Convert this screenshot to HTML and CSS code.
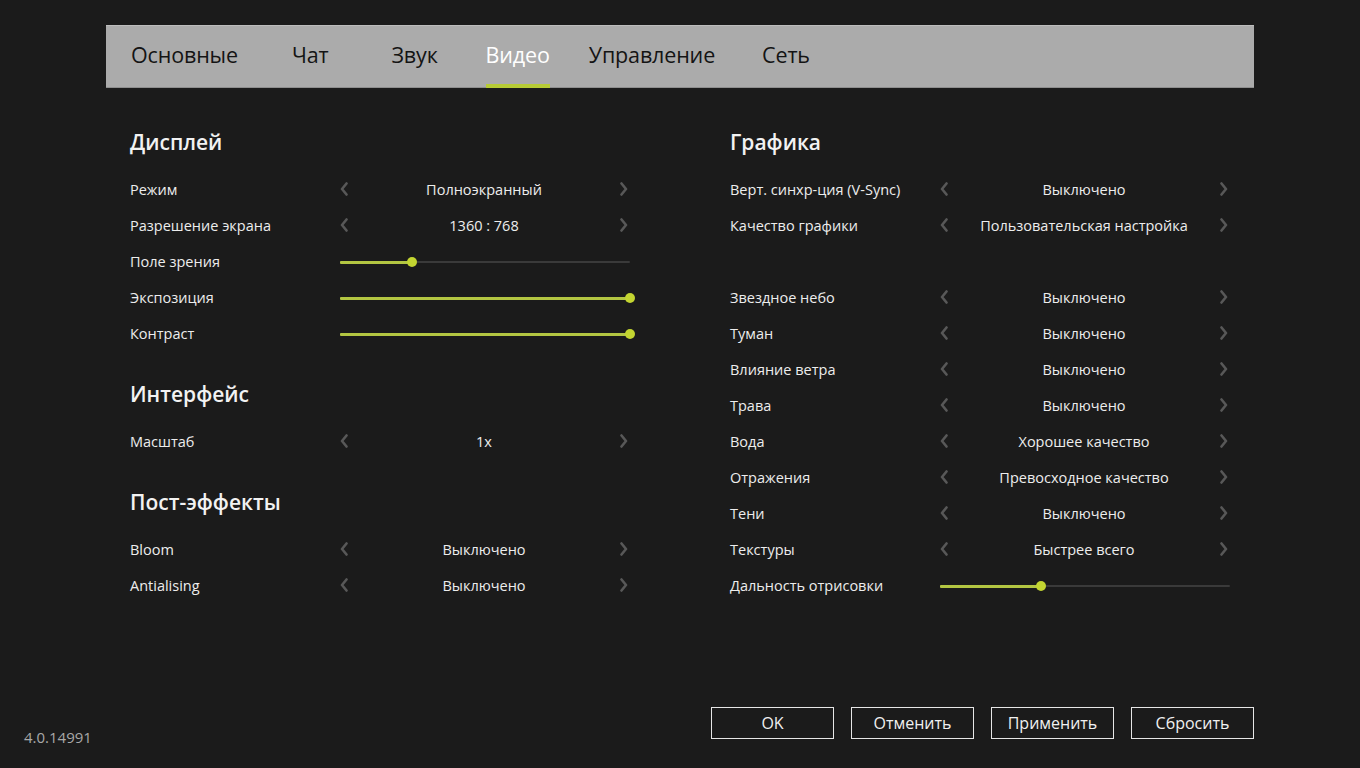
FILE: index.html
```html
<!DOCTYPE html>
<html lang="ru">
<head>
<meta charset="utf-8">
<title>Настройки — Видео</title>
<link rel="stylesheet" href="styles.css">
</head>
<body>
<div class="app">
  <nav class="tabs">
    <span class="tab t1">Основные</span>
    <span class="tab t2">Чат</span>
    <span class="tab t3">Звук</span>
    <span class="tab t4 active">Видео</span>
    <span class="tab t5">Управление</span>
    <span class="tab t6">Сеть</span>
  </nav>

  <main class="content">
    <div class="col">
      <section class="section">
        <h2 class="heading">Дисплей</h2>
        <div class="row"><span class="label">Режим</span><div class="select"><svg class="arr" viewBox="0 0 8 14"><path d="M6.5 1.5 L2 7 L6.5 12.5"/></svg><span class="value">Полноэкранный</span><svg class="arr" viewBox="0 0 8 14"><path d="M1.5 1.5 L6 7 L1.5 12.5"/></svg></div></div>
        <div class="row"><span class="label">Разрешение экрана</span><div class="select"><svg class="arr" viewBox="0 0 8 14"><path d="M6.5 1.5 L2 7 L6.5 12.5"/></svg><span class="value">1360 : 768</span><svg class="arr" viewBox="0 0 8 14"><path d="M1.5 1.5 L6 7 L1.5 12.5"/></svg></div></div>
        <div class="row"><span class="label">Поле зрения</span><div class="slider"><div class="fill" style="width:24.8%"><span class="knob"></span></div></div></div>
        <div class="row"><span class="label">Экспозиция</span><div class="slider"><div class="fill" style="width:100%"><span class="knob"></span></div></div></div>
        <div class="row"><span class="label">Контраст</span><div class="slider"><div class="fill" style="width:100%"><span class="knob"></span></div></div></div>
      </section>
      <section class="section">
        <h2 class="heading">Интерфейс</h2>
        <div class="row"><span class="label">Масштаб</span><div class="select"><svg class="arr" viewBox="0 0 8 14"><path d="M6.5 1.5 L2 7 L6.5 12.5"/></svg><span class="value">1x</span><svg class="arr" viewBox="0 0 8 14"><path d="M1.5 1.5 L6 7 L1.5 12.5"/></svg></div></div>
      </section>
      <section class="section">
        <h2 class="heading">Пост-эффекты</h2>
        <div class="row"><span class="label">Bloom</span><div class="select"><svg class="arr" viewBox="0 0 8 14"><path d="M6.5 1.5 L2 7 L6.5 12.5"/></svg><span class="value">Выключено</span><svg class="arr" viewBox="0 0 8 14"><path d="M1.5 1.5 L6 7 L1.5 12.5"/></svg></div></div>
        <div class="row"><span class="label">Antialising</span><div class="select"><svg class="arr" viewBox="0 0 8 14"><path d="M6.5 1.5 L2 7 L6.5 12.5"/></svg><span class="value">Выключено</span><svg class="arr" viewBox="0 0 8 14"><path d="M1.5 1.5 L6 7 L1.5 12.5"/></svg></div></div>
      </section>
    </div>

    <div class="col">
      <section class="section">
        <h2 class="heading">Графика</h2>
        <div class="row"><span class="label">Верт. синхр-ция (V-Sync)</span><div class="select"><svg class="arr" viewBox="0 0 8 14"><path d="M6.5 1.5 L2 7 L6.5 12.5"/></svg><span class="value">Выключено</span><svg class="arr" viewBox="0 0 8 14"><path d="M1.5 1.5 L6 7 L1.5 12.5"/></svg></div></div>
        <div class="row"><span class="label">Качество графики</span><div class="select"><svg class="arr" viewBox="0 0 8 14"><path d="M6.5 1.5 L2 7 L6.5 12.5"/></svg><span class="value">Пользовательская настройка</span><svg class="arr" viewBox="0 0 8 14"><path d="M1.5 1.5 L6 7 L1.5 12.5"/></svg></div></div>
        <div class="row spacer"></div>
        <div class="row"><span class="label">Звездное небо</span><div class="select"><svg class="arr" viewBox="0 0 8 14"><path d="M6.5 1.5 L2 7 L6.5 12.5"/></svg><span class="value">Выключено</span><svg class="arr" viewBox="0 0 8 14"><path d="M1.5 1.5 L6 7 L1.5 12.5"/></svg></div></div>
        <div class="row"><span class="label">Туман</span><div class="select"><svg class="arr" viewBox="0 0 8 14"><path d="M6.5 1.5 L2 7 L6.5 12.5"/></svg><span class="value">Выключено</span><svg class="arr" viewBox="0 0 8 14"><path d="M1.5 1.5 L6 7 L1.5 12.5"/></svg></div></div>
        <div class="row"><span class="label">Влияние ветра</span><div class="select"><svg class="arr" viewBox="0 0 8 14"><path d="M6.5 1.5 L2 7 L6.5 12.5"/></svg><span class="value">Выключено</span><svg class="arr" viewBox="0 0 8 14"><path d="M1.5 1.5 L6 7 L1.5 12.5"/></svg></div></div>
        <div class="row"><span class="label">Трава</span><div class="select"><svg class="arr" viewBox="0 0 8 14"><path d="M6.5 1.5 L2 7 L6.5 12.5"/></svg><span class="value">Выключено</span><svg class="arr" viewBox="0 0 8 14"><path d="M1.5 1.5 L6 7 L1.5 12.5"/></svg></div></div>
        <div class="row"><span class="label">Вода</span><div class="select"><svg class="arr" viewBox="0 0 8 14"><path d="M6.5 1.5 L2 7 L6.5 12.5"/></svg><span class="value">Хорошее качество</span><svg class="arr" viewBox="0 0 8 14"><path d="M1.5 1.5 L6 7 L1.5 12.5"/></svg></div></div>
        <div class="row"><span class="label">Отражения</span><div class="select"><svg class="arr" viewBox="0 0 8 14"><path d="M6.5 1.5 L2 7 L6.5 12.5"/></svg><span class="value">Превосходное качество</span><svg class="arr" viewBox="0 0 8 14"><path d="M1.5 1.5 L6 7 L1.5 12.5"/></svg></div></div>
        <div class="row"><span class="label">Тени</span><div class="select"><svg class="arr" viewBox="0 0 8 14"><path d="M6.5 1.5 L2 7 L6.5 12.5"/></svg><span class="value">Выключено</span><svg class="arr" viewBox="0 0 8 14"><path d="M1.5 1.5 L6 7 L1.5 12.5"/></svg></div></div>
        <div class="row"><span class="label">Текстуры</span><div class="select"><svg class="arr" viewBox="0 0 8 14"><path d="M6.5 1.5 L2 7 L6.5 12.5"/></svg><span class="value">Быстрее всего</span><svg class="arr" viewBox="0 0 8 14"><path d="M1.5 1.5 L6 7 L1.5 12.5"/></svg></div></div>
        <div class="row"><span class="label">Дальность отрисовки</span><div class="slider"><div class="fill" style="width:34.8%"><span class="knob"></span></div></div></div>
      </section>
    </div>
  </main>

  <footer class="footer">
    <span class="version">4.0.14991</span>
    <div class="buttons">
      <button class="btn">OK</button>
      <button class="btn">Отменить</button>
      <button class="btn">Применить</button>
      <button class="btn">Сбросить</button>
    </div>
  </footer>
</div>
</body>
</html>
```

FILE: styles.css
```css
* { box-sizing: border-box; }

html, body {
  margin: 0;
  padding: 0;
  background: #1b1b1b;
}

body {
  font-family: "Open Sans", "Noto Sans", "DejaVu Sans", sans-serif;
  color: #ececec;
}

.app {
  width: 1360px;
  height: 768px;
  display: flex;
  flex-direction: column;
}

/* Tabs */
.tabs {
  margin: 25px 106px 0;
  height: 63px;
  background: #ababab;
  border-top: 1px solid #bdbdbd;
  border-bottom: 1px solid #8e8e8e;
  display: flex;
  align-items: stretch;
  padding-left: 25px;
}

.tab {
  position: relative;
  display: flex;
  align-items: center;
  font-size: 21.5px;
  color: #141414;
  padding-bottom: 4px;
  letter-spacing: -0.15px;
}

.t1 { margin-right: 54px; }
.t2 { margin-right: 63px; }
.t3 { margin-right: 48px; }
.t4 { margin-right: 39px; }
.t5 { margin-right: 47px; }

.tab.active {
  color: #ffffff;
}

.tab.active::after {
  content: "";
  position: absolute;
  left: 0;
  right: 0;
  bottom: -1px;
  height: 4px;
  background: #b6cb35;
}

/* Content */
.content {
  flex: 1;
  display: grid;
  grid-template-columns: 600px 600px;
  padding-left: 130px;
  padding-top: 39px;
}

.col {
  display: flex;
  flex-direction: column;
  gap: 28px;
}

.heading {
  margin: 0 0 14px;
  height: 30px;
  line-height: 30px;
  font-size: 21px;
  font-weight: 600;
  color: #f2f2f2;
}

.row {
  height: 36px;
  display: grid;
  grid-template-columns: 210px 290px;
  align-items: center;
}

.label {
  font-size: 14.5px;
  font-weight: 500;
  color: #ededed;
  white-space: nowrap;
}

.select {
  display: flex;
  align-items: center;
  justify-content: space-between;
  padding: 0 2px 0 0;
}

.arr {
  width: 8px;
  height: 14px;
  fill: none;
  stroke: #585858;
  stroke-width: 2.6;
  stroke-linecap: round;
  stroke-linejoin: round;
}

.value {
  flex: 1;
  text-align: center;
  font-size: 14.5px;
  font-weight: 500;
  color: #ededed;
  white-space: nowrap;
}

.slider {
  position: relative;
  height: 2px;
  margin-top: 2px;
  background: #3a3a3a;
  border-radius: 1px;
}

.fill {
  position: relative;
  height: 3px;
  margin-top: -0.5px;
  background: #b3c642;
  border-radius: 1px;
}

.knob {
  position: absolute;
  right: -5px;
  top: -3.5px;
  width: 10px;
  height: 10px;
  border-radius: 50%;
  background: #c3d531;
}

/* Footer */
.footer {
  display: flex;
  justify-content: space-between;
  align-items: flex-end;
  padding: 0 106px 29px 24px;
}

.version {
  font-size: 15px;
  color: #a8a8a8;
  line-height: 20px;
  margin-bottom: -8px;
}

.buttons {
  display: flex;
  gap: 17px;
}

.btn {
  width: 123px;
  height: 32px;
  background: transparent;
  border: 1.5px solid #e6e6e6;
  color: #f0f0f0;
  font-family: "Open Sans", "Noto Sans", sans-serif;
  font-size: 16px;
  font-weight: 500;
  padding: 0;
}
```
